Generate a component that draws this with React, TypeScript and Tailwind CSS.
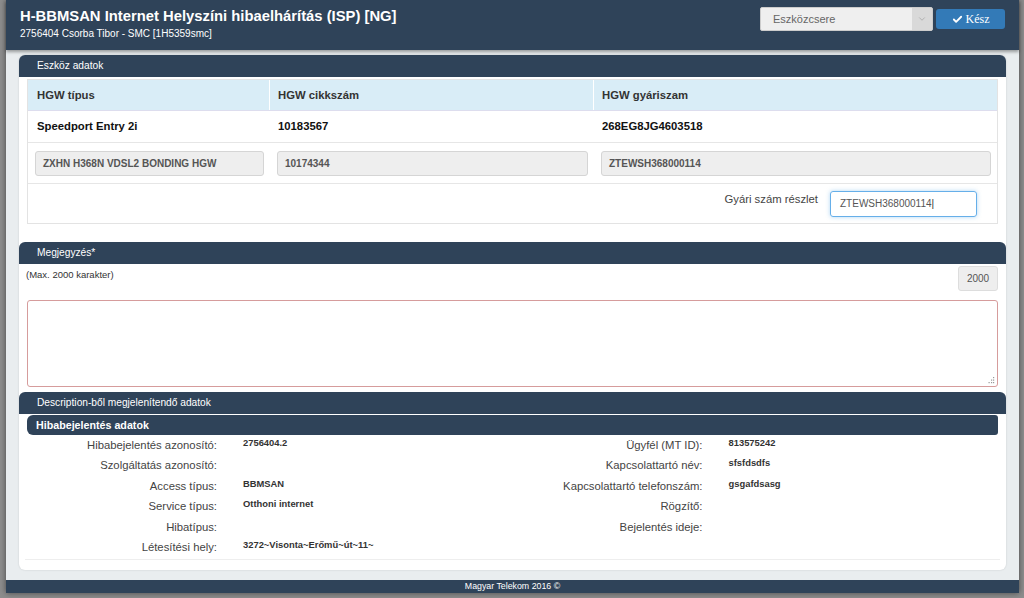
import { Check, ChevronDown } from "lucide-react";

const font = { fontFamily: '"Liberation Sans", Arial, sans-serif' };

const leftRows: [string, string][] = [
  ["Hibabejelentés azonosító:", "2756404.2"],
  ["Szolgáltatás azonosító:", ""],
  ["Access típus:", "BBMSAN"],
  ["Service típus:", "Otthoni internet"],
  ["Hibatípus:", ""],
  ["Létesítési hely:", "3272~Visonta~Erőmű~út~11~"],
];

const rightRows: [string, string][] = [
  ["Ügyfél (MT ID):", "813575242"],
  ["Kapcsolattartó név:", "sfsfdsdfs"],
  ["Kapcsolattartó telefonszám:", "gsgafdsasg"],
  ["Rögzítő:", ""],
  ["Bejelentés ideje:", ""],
];

function SectionHeader({ title }: { title: string }) {
  return (
    <div className="h-[22px] bg-[#2f4359] rounded-tl-[6px] rounded-tr-[6px] text-white text-[10.2px] flex items-center pl-[18px]">
      {title}
    </div>
  );
}

function DetailColumn({ rows }: { rows: [string, string][] }) {
  return (
    <div className="flex-1 flex flex-col">
      {rows.map(([label, value]) => (
        <div key={label} className="h-[20.4px] flex">
          <div className="w-[190px] text-right text-[11.3px] text-[#444] leading-[20px]">
            {label}
          </div>
          <div className="pl-[26px] text-[9.4px] font-bold text-[#333] leading-[16px]">
            {value}
          </div>
        </div>
      ))}
    </div>
  );
}

export default function App() {
  return (
    <div
      className="w-[1024px] h-[598px] bg-[#8d8d8d] pl-[6px] pr-[5px] pb-[5px] overflow-hidden"
      style={font}
    >
      <div className="h-[593px] flex flex-col bg-[#e9edef] shadow-[0_0_6px_rgba(0,0,0,0.5)]">
        {/* header */}
        <div className="h-[50px] bg-[#2f4359] flex justify-between px-[14px] shadow-[0_2px_3px_rgba(0,0,0,0.35)] relative">
          <div className="pt-[7px]">
            <div className="text-white text-[14.8px] font-bold leading-[18px]">
              H-BBMSAN Internet Helyszíni hibaelhárítás (ISP) [NG]
            </div>
            <div className="text-white text-[10px] leading-[12px] mt-[3px]">
              2756404 Csorba Tibor - SMC [1H5359smc]
            </div>
          </div>
          <div className="flex items-start pt-[7px] gap-[3px]">
            <div className="w-[173px] h-[24px] bg-[#efefef] border border-[#ccc] rounded-[2px] flex">
              <div className="flex-1 text-[11px] text-[#666] pl-[12px] leading-[22px]">
                Eszközcsere
              </div>
              <div className="w-[20px] bg-[#d9d9d9] flex items-center justify-center">
                <ChevronDown size={10} className="text-[#aaa]" />
              </div>
            </div>
            <div className="mt-[2px] w-[69px] h-[20px] bg-[#337ab7] rounded-[3px] flex items-center justify-center gap-[3px] text-white">
              <Check size={11} strokeWidth={4} />
              <span className="text-[12px]" style={{ fontFamily: '"Liberation Serif", serif' }}>
                Kész
              </span>
            </div>
          </div>
        </div>

        {/* body */}
        <div className="flex-1 px-[13px] pt-[5px] pb-[10px]">
          <div className="h-full bg-white rounded-[6px] shadow-[0_0_2px_rgba(0,0,0,0.15)] flex flex-col">
            <SectionHeader title="Eszköz adatok" />
            <div className="px-[8px] pt-[2px]">
              <div className="border border-[#e3e3e3]">
                <div className="h-[31px] bg-[#d9edf7] flex text-[11.3px] font-bold text-[#333] border-b border-[#dde]">
                  <div className="w-[242px] pl-[9px] flex items-center border-r border-white">HGW típus</div>
                  <div className="w-[324px] pl-[8px] flex items-center border-r border-white">HGW cikkszám</div>
                  <div className="flex-1 pl-[8px] flex items-center">HGW gyáriszam</div>
                </div>
                <div className="h-[32px] flex text-[11.3px] font-bold text-[#111] border-b border-[#e6e6e6]">
                  <div className="w-[242px] pl-[9px] flex items-center">Speedport Entry 2i</div>
                  <div className="w-[324px] pl-[8px] flex items-center">10183567</div>
                  <div className="flex-1 pl-[8px] flex items-center">268EG8JG4603518</div>
                </div>
                <div className="h-[41px] flex items-center border-b border-[#e6e6e6]">
                  {[
                    ["w-[242px]", "ZXHN H368N VDSL2 BONDING HGW"],
                    ["w-[324px]", "10174344"],
                    ["flex-1", "ZTEWSH368000114"],
                  ].map(([w, v]) => (
                    <div key={v} className={`${w} pl-[7px] pr-[6px]`}>
                      <div className="h-[25px] bg-[#eeeeee] border border-[#d5d5d5] rounded-[3px] text-[10px] font-bold text-[#555] pl-[7px] leading-[23px]">
                        {v}
                      </div>
                    </div>
                  ))}
                </div>
                <div className="h-[39px] flex items-center justify-end pr-[20px]">
                  <span className="text-[11.3px] text-[#444] mr-[12px] -mt-[8px]">Gyári szám részlet</span>
                  <div className="w-[147px] h-[26px] border border-[#66afe9] rounded-[3px] shadow-[0_0_4px_rgba(102,175,233,0.5)] text-[10px] text-[#555] pl-[9px] leading-[24px]">
                    ZTEWSH368000114<span className="text-[#333]">|</span>
                  </div>
                </div>
              </div>
            </div>

            <div className="mt-[18px]">
              <SectionHeader title="Megjegyzés*" />
            </div>
            <div className="px-[8px]">
              <div className="flex justify-between items-start">
                <span className="text-[9.5px] text-[#333] mt-[4px] -ml-[1px]">(Max. 2000 karakter)</span>
                <div className="mt-[2px] w-[40px] h-[25px] bg-[#eeeeee] border border-[#ddd] rounded-[3px] text-[10px] text-[#555] flex items-center justify-center">
                  2000
                </div>
              </div>
              <div className="mt-[9px] h-[87px] border border-[#d69c9c] rounded-[3px] relative">
                <svg width="7" height="7" viewBox="0 0 7 7" className="absolute right-[2px] bottom-[2px]">
                  <rect x="5" y="0" width="1.2" height="1.2" fill="#999" />
                  <rect x="3" y="2.5" width="1.2" height="1.2" fill="#999" />
                  <rect x="5" y="2.5" width="1.2" height="1.2" fill="#999" />
                  <rect x="0.5" y="5" width="1.2" height="1.2" fill="#999" />
                  <rect x="3" y="5" width="1.2" height="1.2" fill="#999" />
                  <rect x="5" y="5" width="1.2" height="1.2" fill="#999" />
                </svg>
              </div>
            </div>

            <div className="mt-[5px]">
              <SectionHeader title="Description-ből megjelenítendő adatok" />
            </div>
            <div className="px-[8px] pt-[1px]">
              <div className="h-[20px] bg-[#2f4359] rounded-l-[6px] rounded-r-[3px] text-white text-[10.7px] font-bold flex items-center pl-[9px]">
                Hibabejelentés adatok
              </div>
              <div className="flex">
                <DetailColumn rows={leftRows} />
                <DetailColumn rows={rightRows} />
              </div>
              <div className="mt-[2px] border-t border-[#eee] -mx-[2px]" />
            </div>
          </div>
        </div>

        {/* footer */}
        <div className="h-[13px] bg-[#2f4359] text-white text-[8.8px] flex items-center justify-center">
          Magyar Telekom 2016 ©
        </div>
      </div>
    </div>
  );
}
